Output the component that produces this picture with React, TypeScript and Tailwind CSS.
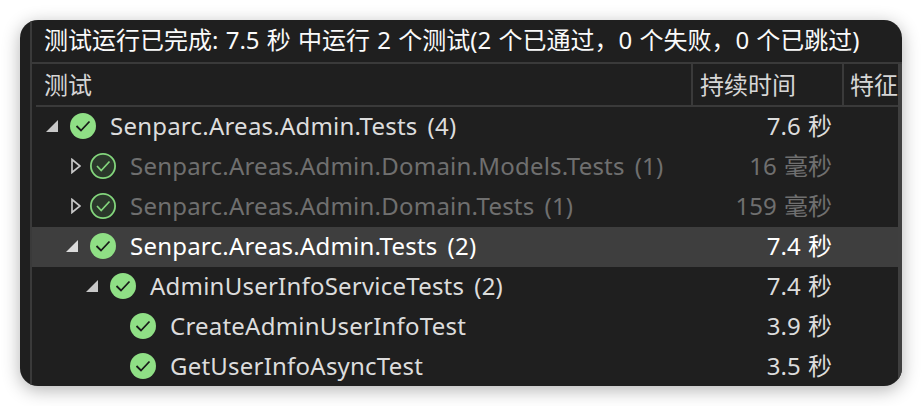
const rows = [
  { name: 'Senparc.Areas.Admin.Tests', count: '(4)', time: '7.6 秒', indent: 0, arrow: 'open', dim: false, active: false },
  { name: 'Senparc.Areas.Admin.Domain.Models.Tests', count: '(1)', time: '16 毫秒', indent: 1, arrow: 'closed', dim: true, active: false },
  { name: 'Senparc.Areas.Admin.Domain.Tests', count: '(1)', time: '159 毫秒', indent: 1, arrow: 'closed', dim: true, active: false },
  { name: 'Senparc.Areas.Admin.Tests', count: '(2)', time: '7.4 秒', indent: 1, arrow: 'open', dim: false, active: true },
  { name: 'AdminUserInfoServiceTests', count: '(2)', time: '7.4 秒', indent: 2, arrow: 'open', dim: false, active: false },
  { name: 'CreateAdminUserInfoTest', count: '', time: '3.9 秒', indent: 3, arrow: 'none', dim: false, active: false },
  { name: 'GetUserInfoAsyncTest', count: '', time: '3.5 秒', indent: 3, arrow: 'none', dim: false, active: false },
];

function Arrow({ type, active }: { type: string; active: boolean }) {
  if (type === 'none') return null;
  if (type === 'open') {
    return (
      <svg width="12" height="12" viewBox="0 0 12 12">
        <path d="M0 12 L12 12 L12 0 Z" fill={active ? '#dcdcdc' : '#c8c8c8'} />
      </svg>
    );
  }
  return (
    <svg width="10" height="16" viewBox="0 0 10 16" className="ml-[5px]">
      <path d="M1 1.5 L9 8 L1 14.5 Z" fill="none" stroke="#c8c8c8" strokeWidth="1.7" />
    </svg>
  );
}

function StatusIcon({ dim }: { dim: boolean }) {
  if (dim) {
    return (
      <svg width="26" height="26" viewBox="0 0 26 26">
        <circle cx="13" cy="13" r="12.1" fill="#2b382b" stroke="#83d67c" strokeWidth="1.8" />
        <path d="M7 13 L11.2 17.5 L19.5 8.5" fill="none" stroke="#83d67c" strokeWidth="1.7" />
      </svg>
    );
  }
  return (
    <svg width="26" height="26" viewBox="0 0 26 26">
      <circle cx="13" cy="13" r="13" fill="#8fdf85" />
      <path d="M6.5 13 L11 17.5 L19.5 8.5" fill="none" stroke="#1a1a1a" strokeWidth="1.8" />
    </svg>
  );
}

export default function App() {
  return (
    <div className="w-[922px] h-[406px] bg-white p-5 font-['Noto_Sans','Noto_Sans_CJK_SC',sans-serif] text-[24px] [word-spacing:1px]">
      <div className="w-[882px] h-[366px] rounded-[18px] overflow-hidden bg-[#1f1f1f] pl-[10px] shadow-[0_4px_18px_rgba(0,0,0,0.3)]">
        <div className="h-full border-l-2 border-[#3a3a3a] flex flex-col">
          <div className="h-[44px] shrink-0 pl-3 pb-[3px] flex items-center text-[#fafafa] whitespace-nowrap border-b-2 border-[#3a3a3a]">
            测试运行已完成: 7.5 秒 中运行 2 个测试(2 个已通过，0 个失败，0 个已跳过)
          </div>
          <div className="flex-1 min-h-0 flex flex-col border-r-4 border-[#3f3f3f]">
            <div className="h-[43px] shrink-0 flex text-[#d6d6d6] pl-1">
              <div className="flex-1 flex items-center pl-2 border-b-2 border-[#3a3a3a]">测试</div>
              <div className="w-[151px] flex items-center pl-[7px] border-l-2 border-b-2 border-[#3a3a3a]">持续时间</div>
              <div className="w-[56px] flex items-center pl-[6px] border-l-2 border-b-2 border-[#3a3a3a] whitespace-nowrap">特征</div>
            </div>
            {rows.map((r, i) => (
              <div key={i} className={`h-10 shrink-0 pb-[2px] flex items-center whitespace-nowrap ${r.active ? 'bg-[#3e3e3e] text-white' : r.dim ? 'text-[#6f6f6f]' : 'text-[#dcdcdc]'}`}>
                <div className="flex-1 flex items-center tracking-[0.22px]" style={{ paddingLeft: 14 + r.indent * 20 }}>
                  <div className="w-6 flex items-center"><Arrow type={r.arrow} active={r.active} /></div>
                  <StatusIcon dim={r.dim} />
                  <span className="ml-[14px]">{r.name}</span>
                  {r.count && <span className="ml-[10px]">{r.count}</span>}
                </div>
                <div className="w-[180px] text-right pr-[66px]">{r.time}</div>
              </div>
            ))}
          </div>
        </div>
      </div>
    </div>
  );
}
